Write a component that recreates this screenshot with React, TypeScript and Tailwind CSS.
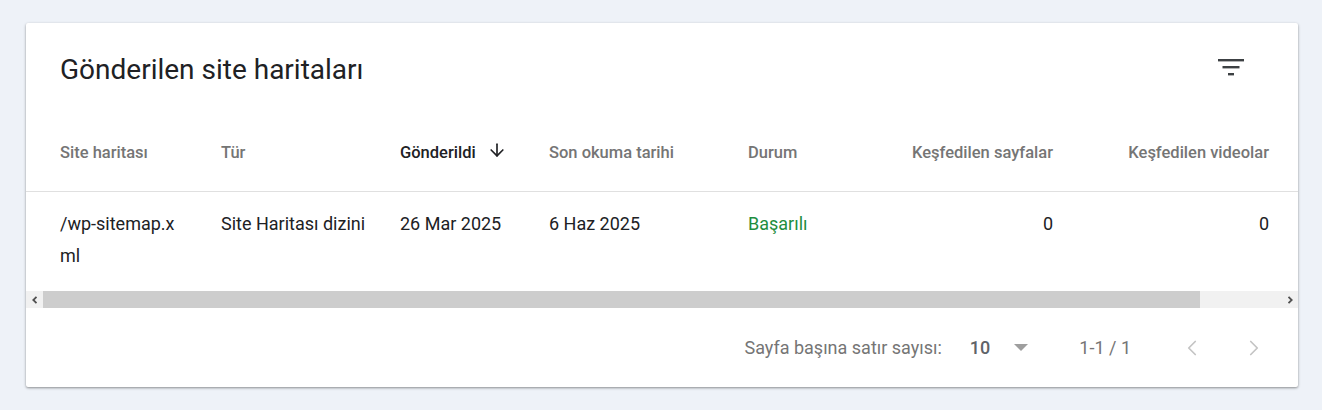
import { ArrowDown, ChevronLeft, ChevronRight } from "lucide-react";

const font = { fontFamily: "Roboto, 'Liberation Sans', sans-serif" };

function FilterIcon() {
  return (
    <svg width="26" height="18" viewBox="0 0 26 18" className="text-[#3c4043]">
      <rect x="0" y="0" width="26" height="2.4" fill="currentColor" />
      <rect x="4.5" y="7" width="17" height="2.4" fill="currentColor" />
      <rect x="10" y="14" width="6" height="2.4" fill="currentColor" />
    </svg>
  );
}

function ScrollArrow({ dir }: { dir: "left" | "right" }) {
  return (
    <div className="flex h-[17px] w-[17px] items-center justify-center bg-[#f1f1f1]">
      <svg width="6" height="8" viewBox="0 0 6 8">
        {dir === "left" ? (
          <path d="M4.5 0.8 L1.3 4 L4.5 7.2" stroke="#505050" strokeWidth="1.8" fill="none" />
        ) : (
          <path d="M1.5 0.8 L4.7 4 L1.5 7.2" stroke="#505050" strokeWidth="1.8" fill="none" />
        )}
      </svg>
    </div>
  );
}

export default function App() {
  const th = "text-[16.5px] font-medium text-[#757575]";
  const td = "text-[18px] leading-[32px]";

  return (
    <div className="min-h-screen bg-[#eef2f8] pl-[26px] pt-[23px]" style={font}>
      <div className="w-[1272px] overflow-hidden rounded-[2px] bg-white shadow-[0_1px_3px_rgba(0,0,0,0.3),0_1px_2px_rgba(0,0,0,0.15)]">
        {/* Title */}
        <div className="flex h-[93px] items-center justify-between pl-[34px] pr-[54px]">
          <h2 className="text-[28px] text-[#202124]">Gönderilen site haritaları</h2>
          <button aria-label="Filtre" className="mt-[-4px]">
            <FilterIcon />
          </button>
        </div>

        {/* Table */}
        <div className="overflow-hidden">
          <div className="w-[1400px]">
            <div className="flex h-[76px] items-center border-b border-[#e0e0e0] pl-[34px]">
              <div className={`w-[161px] ${th}`}>Site haritası</div>
              <div className={`w-[179px] ${th}`}>Tür</div>
              <div className="flex w-[149px] items-center text-[16.5px] font-medium text-[#202124]">
                Gönderildi
                <ArrowDown className="ml-[11px] mt-[-7px] h-[20px] w-[20px]" strokeWidth={2} />
              </div>
              <div className={`w-[199px] ${th}`}>Son okuma tarihi</div>
              <div className={`w-[110px] ${th}`}>Durum</div>
              <div className={`w-[195px] text-right ${th}`}>Keşfedilen sayfalar</div>
              <div className={`w-[216px] text-right ${th}`}>Keşfedilen videolar</div>
            </div>
            <div className="flex h-[99px] items-start pl-[34px] pt-[16px] text-[#202124]">
              <div className={`w-[161px] pr-[10px] ${td}`}>
                /wp-sitemap.x
                <br />
                ml
              </div>
              <div className={`w-[179px] ${td}`}>Site Haritası dizini</div>
              <div className={`w-[149px] ${td}`}>26 Mar 2025</div>
              <div className={`w-[199px] ${td}`}>6 Haz 2025</div>
              <div className={`w-[110px] ${td} text-[#1e8e3e]`}>Başarılı</div>
              <div className={`w-[195px] text-right ${td}`}>0</div>
              <div className={`w-[216px] text-right ${td}`}>0</div>
            </div>
          </div>
        </div>

        {/* Scrollbar */}
        <div className="flex h-[17px] bg-[#f1f1f1]">
          <ScrollArrow dir="left" />
          <div className="h-full w-[1157px] bg-[#cdcdcd]" />
          <div className="flex-1" />
          <ScrollArrow dir="right" />
        </div>

        {/* Pagination */}
        <div className="flex h-[79px] items-center justify-end pr-[31px] text-[18px] text-[#757575]">
          <span>Sayfa başına satır sayısı:</span>
          <span className="ml-[28px] font-medium text-[#5f6368]">10</span>
          <svg width="14" height="8" viewBox="0 0 14 8" className="ml-[24px]">
            <path d="M0 0 L14 0 L7 7 Z" fill="#9e9e9e" />
          </svg>
          <span className="ml-[51px]">1-1 / 1</span>
          <ChevronLeft className="ml-[48px] h-[26px] w-[26px] text-[#c4c4c4]" strokeWidth={1.6} />
          <ChevronRight className="ml-[36px] h-[26px] w-[26px] text-[#c4c4c4]" strokeWidth={1.6} />
        </div>
      </div>
    </div>
  );
}
